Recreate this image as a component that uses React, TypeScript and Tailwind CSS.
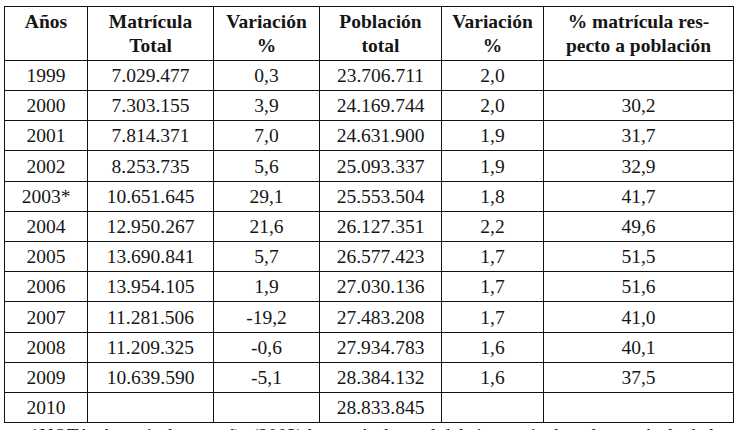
const rows: [string, string, string, string, string, string][] = [
  ["1999", "7.029.477", "0,3", "23.706.711", "2,0", ""],
  ["2000", "7.303.155", "3,9", "24.169.744", "2,0", "30,2"],
  ["2001", "7.814.371", "7,0", "24.631.900", "1,9", "31,7"],
  ["2002", "8.253.735", "5,6", "25.093.337", "1,9", "32,9"],
  ["2003*", "10.651.645", "29,1", "25.553.504", "1,8", "41,7"],
  ["2004", "12.950.267", "21,6", "26.127.351", "2,2", "49,6"],
  ["2005", "13.690.841", "5,7", "26.577.423", "1,7", "51,5"],
  ["2006", "13.954.105", "1,9", "27.030.136", "1,7", "51,6"],
  ["2007", "11.281.506", "-19,2", "27.483.208", "1,7", "41,0"],
  ["2008", "11.209.325", "-0,6", "27.934.783", "1,6", "40,1"],
  ["2009", "10.639.590", "-5,1", "28.384.132", "1,6", "37,5"],
  ["2010", "", "", "28.833.845", "", ""],
];

const headers = [
  ["Años"],
  ["Matrícula", "Total"],
  ["Variación", "%"],
  ["Población", "total"],
  ["Variación", "%"],
  ["% matrícula res-", "pecto a población"],
];

const widths = ["w-[83px]", "w-[126px]", "w-[106px]", "w-[122px]", "w-[102px]", "w-[190px]"];

export default function App() {
  return (
    <div className="h-[430px] w-[739px] overflow-hidden bg-white pl-[4px] pt-[6px] font-['Liberation_Serif','Times_New_Roman',serif] text-[#161616]">
      <table className="w-[730px] table-fixed border-collapse text-[19.5px]">
        <colgroup>
          {widths.map((w, i) => (
            <col key={i} className={w} />
          ))}
        </colgroup>
        <thead>
          <tr>
            {headers.map((h, i) => (
              <th key={i} className="h-[54px] border border-[#111] pt-[3px] align-top font-bold leading-[24px]">
                {h.map((line, j) => (
                  <div key={j}>{line}</div>
                ))}
              </th>
            ))}
          </tr>
        </thead>
        <tbody>
          {rows.map((r, i) => (
            <tr key={i} className={i === 3 || i === 8 ? "h-[31px]" : "h-[30px]"}>
              {r.map((c, j) => (
                <td key={j} className="border border-[#111] p-0 pt-[1px] text-center leading-[22px]">
                  {c}
                </td>
              ))}
            </tr>
          ))}
        </tbody>
      </table>
      <p className="pl-[26px] pt-[2px] text-[19px] leading-[22px] whitespace-nowrap">
        *NOTA: A partir de este año (2003) la matrícula total del sistema incluye la matrícula de las misiones
      </p>
    </div>
  );
}
